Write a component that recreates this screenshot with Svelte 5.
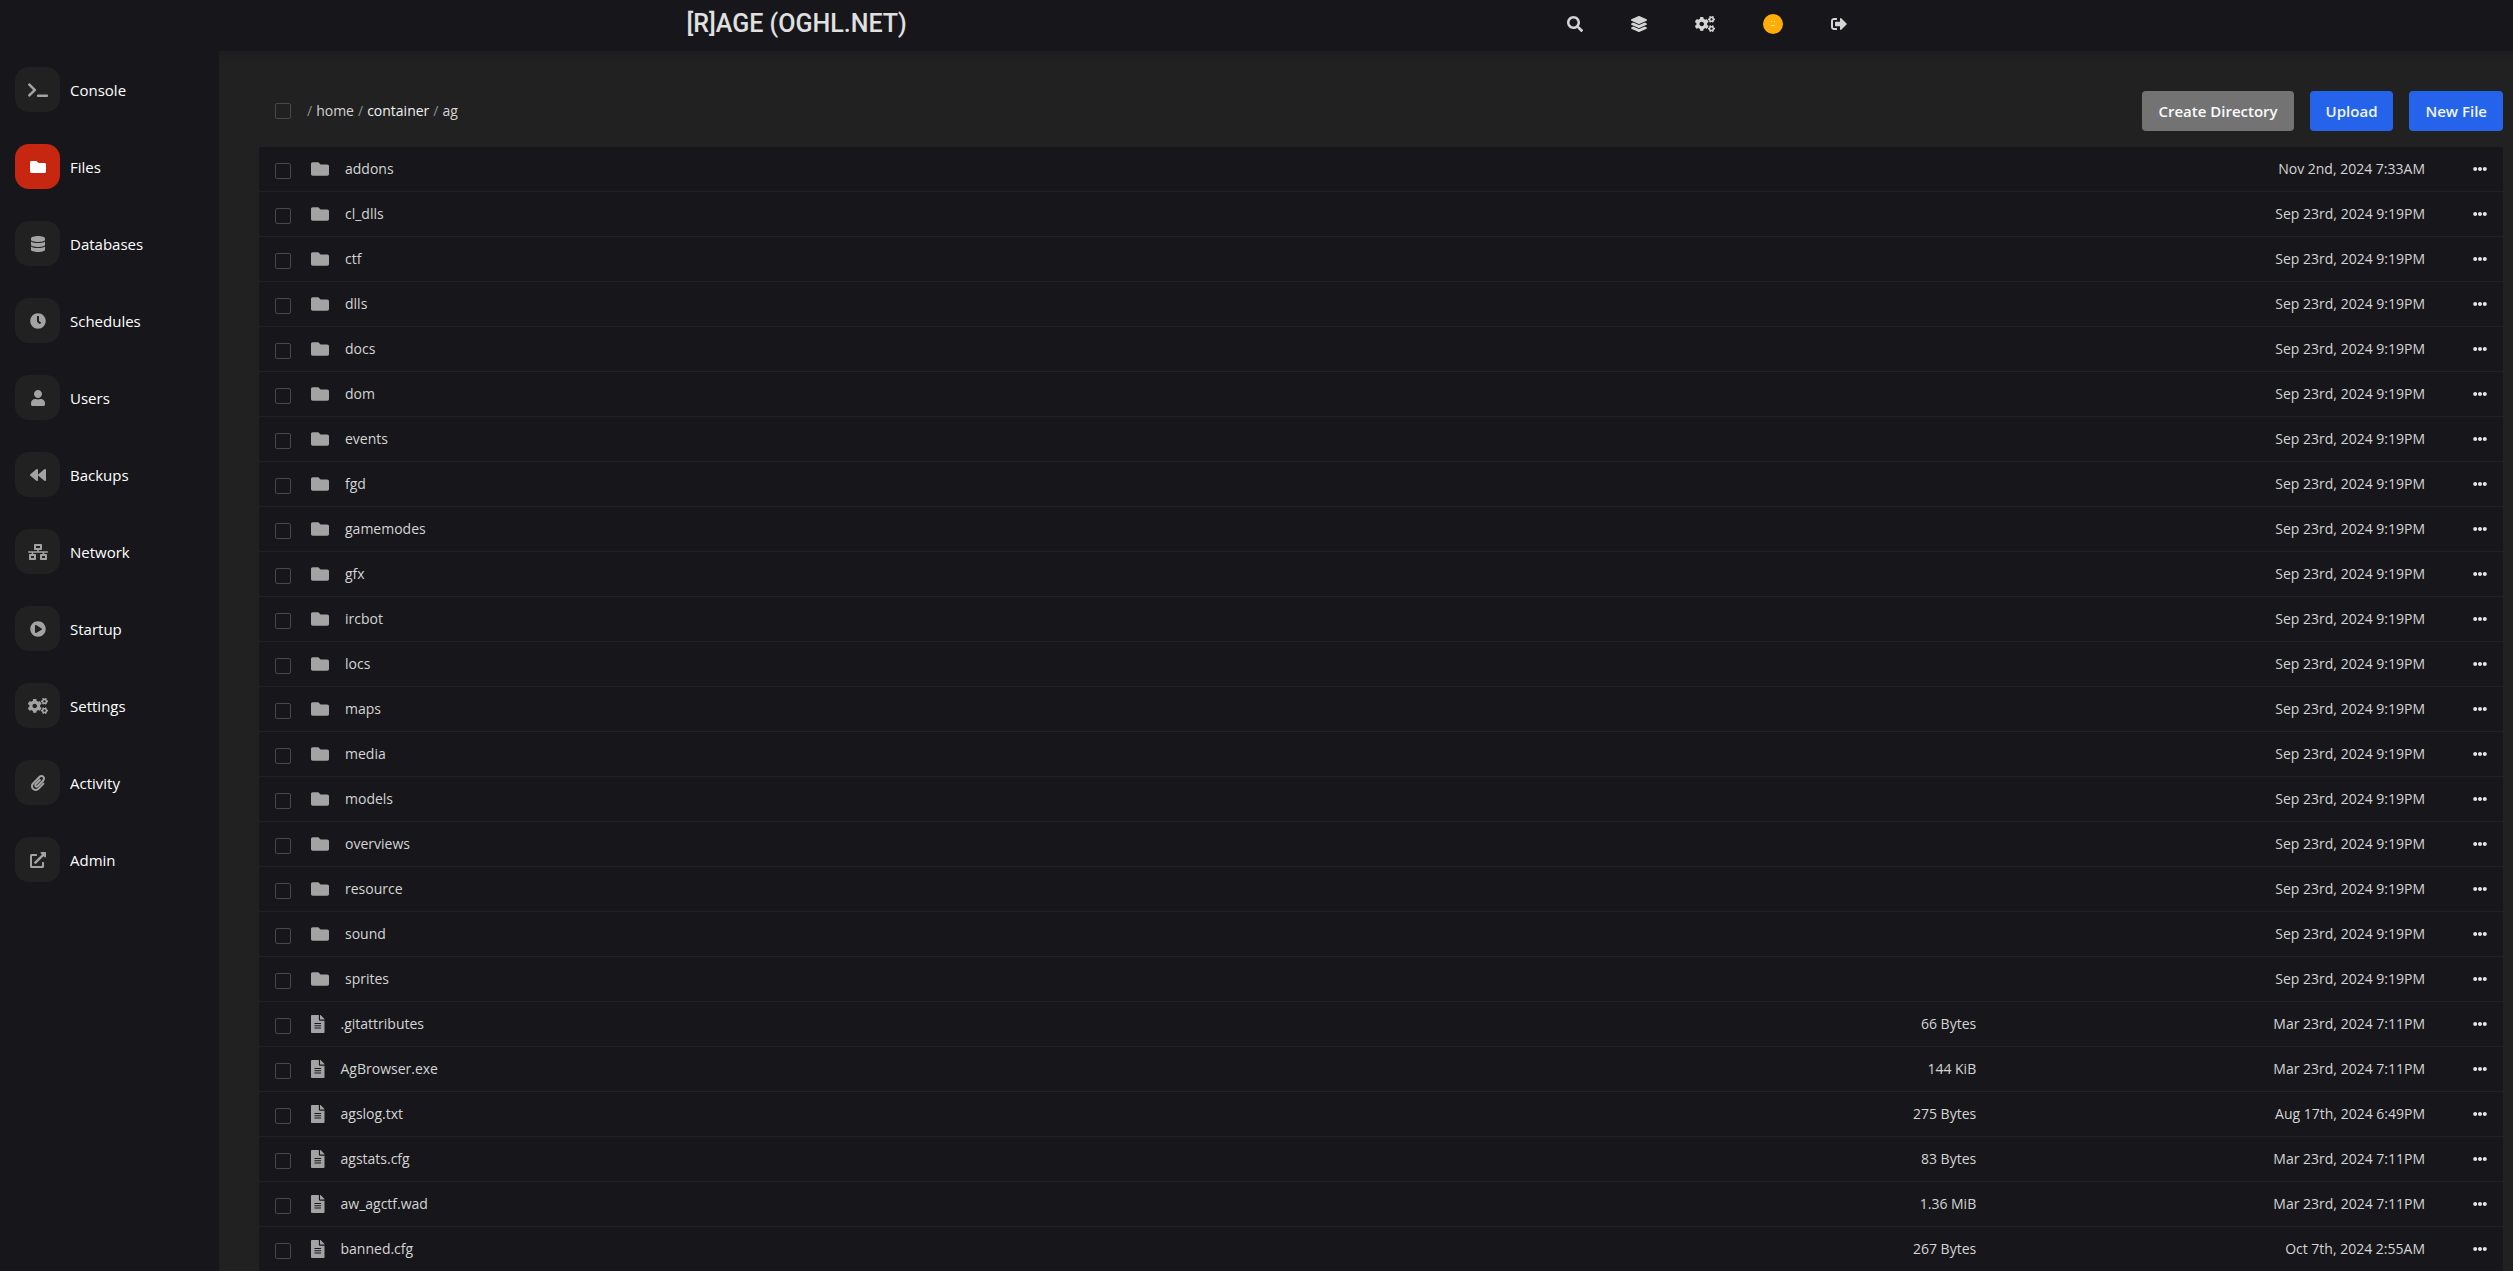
<script lang="ts">
  type IconName = keyof typeof icons;

  const icons = {
    search: { w: 512, d: 'M505 442.7L405.3 343c-4.5-4.5-10.6-7-17-7H372c27.6-35.3 44-79.7 44-128C416 93.1 322.9 0 208 0S0 93.1 0 208s93.1 208 208 208c48.3 0 92.7-16.4 128-44v16.3c0 6.4 2.5 12.5 7 17l99.7 99.7c9.4 9.4 24.6 9.4 33.9 0l28.3-28.3c9.4-9.4 9.4-24.6.1-34zM208 336c-70.7 0-128-57.2-128-128 0-70.7 57.2-128 128-128 70.7 0 128 57.2 128 128 0 70.7-57.2 128-128 128z' },
    layers: { w: 512, d: 'M12.41 148.02l232.94 105.67c6.8 3.09 14.49 3.09 21.29 0l232.94-105.67c16.55-7.51 16.55-32.52 0-40.03L266.65 2.31a25.607 25.607 0 0 0-21.29 0L12.41 107.98c-16.55 7.51-16.55 32.53 0 40.04zm487.18 88.28l-58.09-26.33-161.64 73.27c-7.56 3.43-15.59 5.17-23.86 5.17s-16.29-1.74-23.86-5.17L70.51 209.97l-58.1 26.33c-16.55 7.5-16.55 32.5 0 40l232.94 105.59c6.8 3.08 14.49 3.08 21.29 0L499.59 276.3c16.55-7.5 16.55-32.5 0-40zm0 127.8l-57.87-26.23-161.86 73.37c-7.56 3.43-15.59 5.17-23.86 5.17s-16.29-1.74-23.86-5.17L70.29 337.87 12.41 364.1c-16.55 7.5-16.55 32.5 0 40l232.94 105.59c6.8 3.08 14.49 3.08 21.29 0L499.59 404.1c16.55-7.5 16.55-32.5 0-40z' },
    cogs: { w: 640, d: 'M512.1 191l-8.2 14.3c-3 5.3-9.4 7.5-15.1 5.4-11.8-4.4-22.6-10.7-32.1-18.6-4.6-3.8-5.8-10.5-2.8-15.7l8.2-14.3c-6.9-8-12.3-17.3-15.9-27.4h-16.5c-6 0-11.2-4.3-12.2-10.3-2-12-2.1-24.6 0-37.1 1-6 6.2-10.4 12.2-10.4h16.5c3.6-10.1 9-19.4 15.9-27.4l-8.2-14.3c-3-5.2-1.9-11.9 2.8-15.7 9.5-7.9 20.4-14.2 32.1-18.6 5.7-2.1 12.1.1 15.1 5.4l8.2 14.3c10.5-1.9 21.2-1.9 31.7 0L552 6.3c3-5.3 9.4-7.5 15.1-5.4 11.8 4.4 22.6 10.7 32.1 18.6 4.6 3.8 5.8 10.5 2.8 15.7l-8.2 14.3c6.9 8 12.3 17.3 15.9 27.4h16.5c6 0 11.2 4.3 12.2 10.3 2 12 2.1 24.6 0 37.1-1 6-6.2 10.4-12.2 10.4h-16.5c-3.6 10.1-9 19.4-15.9 27.4l8.2 14.3c3 5.2 1.9 11.9-2.8 15.7-9.5 7.9-20.4 14.2-32.1 18.6-5.7 2.1-12.1-.1-15.1-5.4l-8.2-14.3c-10.4 1.9-21.2 1.9-31.7 0zm-10.5-58.8c38.5 29.6 82.4-14.3 52.8-52.8-38.5-29.7-82.4 14.3-52.8 52.8zM386.3 286.1l33.7 16.8c10.1 5.8 14.5 18.1 10.5 29.1-8.9 24.2-26.4 46.4-42.6 65.8-7.4 8.9-20.2 11.1-30.3 5.3l-29.1-16.8c-16 13.7-34.6 24.6-54.9 31.7v33.6c0 11.6-8.3 21.6-19.7 23.6-24.6 4.2-50.4 4.4-75.9 0-11.5-2-20-11.9-20-23.6V418c-20.3-7.2-38.9-18-54.9-31.7L74 403c-10 5.8-22.9 3.6-30.3-5.3-16.2-19.4-33.3-41.6-42.2-65.7-4-10.9.4-23.2 10.5-29.1l33.3-16.8c-3.9-20.9-3.9-42.4 0-63.4L12 205.8c-10.1-5.8-14.6-18.1-10.5-29 8.9-24.2 26-46.4 42.2-65.8 7.4-8.9 20.2-11.1 30.3-5.3l29.1 16.8c16-13.7 34.6-24.6 54.9-31.7V57.1c0-11.5 8.2-21.5 19.6-23.5 24.6-4.2 50.5-4.4 76-.1 11.5 2 20 11.9 20 23.6v33.6c20.3 7.2 38.9 18 54.9 31.7l29.1-16.8c10-5.8 22.9-3.6 30.3 5.3 16.2 19.4 33.2 41.6 42.1 65.8 4 10.9.1 23.2-10 29.1l-33.7 16.8c3.9 21 3.9 42.5 0 63.5zm-117.6 21.1c59.2-77-28.7-164.9-105.7-105.7-59.2 77 28.7 164.9 105.7 105.7zm243.4 182.7l-8.2 14.3c-3 5.3-9.4 7.5-15.1 5.4-11.8-4.4-22.6-10.7-32.1-18.6-4.6-3.8-5.8-10.5-2.8-15.7l8.2-14.3c-6.9-8-12.3-17.3-15.9-27.4h-16.5c-6 0-11.2-4.3-12.2-10.3-2-12-2.1-24.6 0-37.1 1-6 6.2-10.4 12.2-10.4h16.5c3.6-10.1 9-19.4 15.9-27.4l-8.2-14.3c-3-5.2-1.9-11.9 2.8-15.7 9.5-7.9 20.4-14.2 32.1-18.6 5.7-2.1 12.1.1 15.1 5.4l8.2 14.3c10.5-1.9 21.2-1.9 31.7 0l8.2-14.3c3-5.3 9.4-7.5 15.1-5.4 11.8 4.4 22.6 10.7 32.1 18.6 4.6 3.8 5.8 10.5 2.8 15.7l-8.2 14.3c6.9 8 12.3 17.3 15.9 27.4h16.5c6 0 11.2 4.3 12.2 10.3 2 12 2.1 24.6 0 37.1-1 6-6.2 10.4-12.2 10.4h-16.5c-3.6 10.1-9 19.4-15.9 27.4l8.2 14.3c3 5.2 1.9 11.9-2.8 15.7-9.5 7.9-20.4 14.2-32.1 18.6-5.7 2.1-12.1-.1-15.1-5.4l-8.2-14.3c-10.4 1.9-21.2 1.9-31.7 0zM501.6 431c38.5 29.6 82.4-14.3 52.8-52.8-38.5-29.6-82.4 14.3-52.8 52.8z' },
    signOut: { w: 512, d: 'M497 273L329 441c-15 15-41 4.5-41-17v-96H152c-13.3 0-24-10.7-24-24v-96c0-13.3 10.7-24 24-24h136V88c0-21.4 25.9-32 41-17l168 168c9.3 9.4 9.3 24.6 0 34zM192 436v-40c0-6.6-5.4-12-12-12H96c-17.7 0-32-14.3-32-32V160c0-17.7 14.3-32 32-32h84c6.6 0 12-5.4 12-12V76c0-6.6-5.4-12-12-12H96c-53 0-96 43-96 96v192c0 53 43 96 96 96h84c6.6 0 12-5.4 12-12z' },
    terminal: { w: 640, d: 'M257.981 272.971L63.638 467.314c-9.373 9.373-24.569 9.373-33.941 0L7.029 444.647c-9.357-9.357-9.375-24.522-.04-33.901L161.011 256 6.99 101.255c-9.335-9.379-9.317-24.544.04-33.901l22.667-22.667c9.373-9.373 24.569-9.373 33.941 0L257.981 239.03c9.373 9.372 9.373 24.568 0 33.941zM640 456v-32c0-13.255-10.745-24-24-24H312c-13.255 0-24 10.745-24 24v32c0 13.255 10.745 24 24 24h304c13.255 0 24-10.745 24-24z' },
    folder: { w: 512, d: 'M464 128H272l-64-64H48C21.49 64 0 85.49 0 112v288c0 26.51 21.49 48 48 48h416c26.51 0 48-21.49 48-48V176c0-26.51-21.49-48-48-48z' },
    database: { w: 448, d: 'M448 73.143v45.714C448 159.143 347.667 192 224 192S0 159.143 0 118.857V73.143C0 32.857 100.333 0 224 0s224 32.857 224 73.143zM448 176v102.857C448 319.143 347.667 352 224 352S0 319.143 0 278.857V176c48.125 33.143 136.208 48.572 224 48.572S399.874 209.143 448 176zm0 160v102.857C448 479.143 347.667 512 224 512S0 479.143 0 438.857V336c48.125 33.143 136.208 48.572 224 48.572S399.874 369.143 448 336z' },
    clock: { w: 512, d: 'M256,8C119,8,8,119,8,256S119,504,256,504,504,393,504,256,393,8,256,8Zm92.49,313h0l-20,25a16,16,0,0,1-22.49,2.5h0l-67-49.72a40,40,0,0,1-15-31.23V112a16,16,0,0,1,16-16h32a16,16,0,0,1,16,16V256l58,42.5A16,16,0,0,1,348.49,321Z' },
    user: { w: 448, d: 'M224 256c70.7 0 128-57.3 128-128S294.7 0 224 0 96 57.3 96 128s57.3 128 128 128zm89.6 32h-16.7c-22.2 10.2-46.9 16-72.9 16s-50.6-5.8-72.9-16h-16.7C60.2 288 0 348.2 0 422.4V464c0 26.5 21.5 48 48 48h352c26.5 0 48-21.5 48-48v-41.6c0-74.2-60.2-134.4-134.4-134.4z' },
    backward: { w: 512, d: 'M11.5 280.6l192 160c20.6 17.2 52.5 2.8 52.5-24.6V96c0-27.4-31.9-41.8-52.5-24.6l-192 160c-15.3 12.8-15.3 36.4 0 49.2zm256 0l192 160c20.6 17.2 52.5 2.8 52.5-24.6V96c0-27.4-31.9-41.8-52.5-24.6l-192 160c-15.3 12.8-15.3 36.4 0 49.2z' },
    network: { w: 640, d: 'M640 264v-16c0-8.84-7.16-16-16-16H344v-40h72c17.67 0 32-14.33 32-32V32c0-17.67-14.33-32-32-32H224c-17.67 0-32 14.33-32 32v128c0 17.67 14.33 32 32 32h72v40H16c-8.84 0-16 7.16-16 16v16c0 8.84 7.16 16 16 16h104v40H64c-17.67 0-32 14.33-32 32v128c0 17.67 14.33 32 32 32h160c17.67 0 32-14.33 32-32V352c0-17.67-14.33-32-32-32h-56v-40h304v40h-56c-17.67 0-32 14.33-32 32v128c0 17.67 14.33 32 32 32h160c17.67 0 32-14.33 32-32V352c0-17.67-14.33-32-32-32h-56v-40h104c8.84 0 16-7.16 16-16zM256 128V64h128v64H256zm-64 320H96v-64h96v64zm352 0h-96v-64h96v64z' },
    play: { w: 512, d: 'M256 8C119 8 8 119 8 256s111 248 248 248 248-111 248-248S393 8 256 8zm115.7 272l-176 101c-15.8 8.8-35.7-2.5-35.7-21V152c0-18.4 19.8-29.8 35.7-21l176 107c16.4 9.2 16.4 32.9 0 42z' },
    paperclip: { w: 448, d: 'M43.246 466.142c-58.43-60.289-57.341-157.511 1.386-217.581L254.392 34c44.316-45.332 116.351-45.336 160.671 0 43.89 44.894 43.943 117.329 0 162.276L232.214 383.128c-29.855 30.537-78.633 30.111-107.982-.998-28.275-29.97-27.368-77.473 1.452-106.953l143.743-146.835c6.182-6.314 16.312-6.422 22.626-.241l22.861 22.379c6.315 6.182 6.422 16.312.241 22.626L171.427 319.927c-4.932 5.045-5.236 13.428-.648 18.292 4.372 4.634 11.245 4.711 15.688.165l182.849-186.851c19.613-20.062 19.613-52.725-.011-72.798-19.189-19.627-49.957-19.637-69.154 0L90.39 293.295c-34.763 35.56-35.299 93.12-1.191 128.313 34.01 35.093 88.985 35.137 123.058.286l172.06-175.999c6.177-6.319 16.307-6.433 22.626-.256l22.877 22.364c6.319 6.177 6.434 16.307.256 22.626l-172.06 175.998c-59.576 60.938-155.943 60.216-214.77-.485z' },
    external: { w: 512, d: 'M432,320H400a16,16,0,0,0-16,16V448H64V128H208a16,16,0,0,0,16-16V80a16,16,0,0,0-16-16H48A48,48,0,0,0,0,112V464a48,48,0,0,0,48,48H400a48,48,0,0,0,48-48V336A16,16,0,0,0,432,320ZM488,0h-128c-21.37,0-32.05,25.91-17,41l35.73,35.73L135,320.37a24,24,0,0,0,0,34L157.67,377a24,24,0,0,0,34,0L435.28,133.32,471,169c15,15,41,4.5,41-17V24A24,24,0,0,0,488,0Z' },
    file: { w: 384, d: 'M224 136V0H24C10.7 0 0 10.7 0 24v464c0 13.3 10.7 24 24 24h336c13.3 0 24-10.7 24-24V160H248c-13.2 0-24-10.8-24-24zm64 236c0 6.6-5.4 12-12 12H108c-6.6 0-12-5.4-12-12v-8c0-6.6 5.4-12 12-12h168c6.6 0 12 5.4 12 12v8zm0-64c0 6.6-5.4 12-12 12H108c-6.6 0-12-5.4-12-12v-8c0-6.6 5.4-12 12-12h168c6.6 0 12 5.4 12 12v8zm0-72v8c0 6.6-5.4 12-12 12H108c-6.6 0-12-5.4-12-12v-8c0-6.6 5.4-12 12-12h168c6.6 0 12 5.4 12 12zm96-114.1v6.1H256V0h6.1c6.4 0 12.5 2.5 17 7l97.9 98c4.5 4.5 7 10.6 7 16.9z' },
    ellipsis: { w: 512, d: 'M328 256c0 39.8-32.2 72-72 72s-72-32.2-72-72 32.2-72 72-72 72 32.2 72 72zm104-72c-39.8 0-72 32.2-72 72s32.2 72 72 72 72-32.2 72-72-32.2-72-72-72zm-352 0c-39.8 0-72 32.2-72 72s32.2 72 72 72 72-32.2 72-72-32.2-72-72-72z' }
  };

  const menu: { label: string; icon: IconName }[] = [
    { label: 'Console', icon: 'terminal' },
    { label: 'Files', icon: 'folder' },
    { label: 'Databases', icon: 'database' },
    { label: 'Schedules', icon: 'clock' },
    { label: 'Users', icon: 'user' },
    { label: 'Backups', icon: 'backward' },
    { label: 'Network', icon: 'network' },
    { label: 'Startup', icon: 'play' },
    { label: 'Settings', icon: 'cogs' },
    { label: 'Activity', icon: 'paperclip' },
    { label: 'Admin', icon: 'external' }
  ];

  type Entry = { name: string; kind: 'folder' | 'file'; size: string; modified: string };

  const SEPTEMBER = 'Sep 23rd, 2024 9:19PM';
  const MARCH = 'Mar 23rd, 2024 7:11PM';
  const folder = (name: string, modified = SEPTEMBER): Entry => ({ name, kind: 'folder', size: '', modified });
  const file = (name: string, size: string, modified = MARCH): Entry => ({ name, kind: 'file', size, modified });

  const entries: Entry[] = [
    folder('addons', 'Nov 2nd, 2024 7:33AM'),
    ...['cl_dlls', 'ctf', 'dlls', 'docs', 'dom', 'events', 'fgd', 'gamemodes', 'gfx', 'ircbot', 'locs',
      'maps', 'media', 'models', 'overviews', 'resource', 'sound', 'sprites'].map((n) => folder(n)),
    file('.gitattributes', '66 Bytes'),
    file('AgBrowser.exe', '144 KiB'),
    file('agslog.txt', '275 Bytes', 'Aug 17th, 2024 6:49PM'),
    file('agstats.cfg', '83 Bytes'),
    file('aw_agctf.wad', '1.36 MiB'),
    file('banned.cfg', '267 Bytes', 'Oct 7th, 2024 2:55AM')
  ];
</script>

{#snippet icon(name: IconName)}
  <svg class="icon" viewBox="0 0 {icons[name].w} 512" aria-hidden="true"><path d={icons[name].d} /></svg>
{/snippet}

<div class="page">
  <header class="topbar">
    <div class="topbar-inner">
      <a class="brand" href="#home">[R]AGE (OGHL.NET)</a>
      <nav class="tools" aria-label="Account">
        <button type="button" aria-label="Search">{@render icon('search')}</button>
        <a href="#servers" aria-label="Servers">{@render icon('layers')}</a>
        <a href="#admin" aria-label="Administration">{@render icon('cogs')}</a>
        <a href="#account" aria-label="Account settings">
          <svg class="avatar" viewBox="0 0 20 20" aria-hidden="true">
            <circle cx="10" cy="10" r="10" fill="#ffad08" />
            <path d="M8.5 7v1M11.5 7v1M8 11.5h4" stroke="#ffe2a6" stroke-width="1" />
          </svg>
        </a>
        <button type="button" aria-label="Sign out">{@render icon('signOut')}</button>
      </nav>
    </div>
  </header>

  <div class="body">
    <nav class="sidebar" aria-label="Server">
      {#each menu as item}
        <a class="menu-item" class:active={item.label === 'Files'} href="#{item.label.toLowerCase()}">
          <span class="tile">{@render icon(item.icon)}</span>
          {item.label}
        </a>
      {/each}
    </nav>

    <main class="content">
      <div class="toolbar">
        <input type="checkbox" aria-label="Select all files" />
        <div class="crumbs">
          <span>/</span>
          <span class="crumb">home</span>
          <span>/</span>
          <a class="crumb root" href="#container">container</a>
          <span>/</span>
          <span class="crumb">ag</span>
        </div>
        <div class="actions">
          <button type="button" class="secondary">Create Directory</button>
          <button type="button">Upload</button>
          <button type="button">New File</button>
        </div>
      </div>

      <table class="files">
        <colgroup>
          <col class="col-check" /><col /><col class="col-size" /><col class="col-date" /><col class="col-menu" />
        </colgroup>
        <tbody>
          {#each entries as entry}
            <tr>
              <td class="check"><input type="checkbox" aria-label="Select {entry.name}" /></td>
              <td><a class="name" href="#{entry.name}">{@render icon(entry.kind)}{entry.name}</a></td>
              <td class="right">{entry.size}</td>
              <td class="right">{entry.modified}</td>
              <td class="more"><button type="button" aria-label="Actions for {entry.name}">{@render icon('ellipsis')}</button></td>
            </tr>
          {/each}
        </tbody>
      </table>
    </main>
  </div>
</div>

<style>
  :global(body) {
    margin: 0;
    background: #17171b;
  }

  .page {
    min-height: 100vh;
    display: flex;
    flex-direction: column;
    font-family: 'Open Sans', 'Noto Sans', sans-serif;
    font-size: 14px;
    line-height: 20px;
    color: #d4d4d4;
    background: #17171b;
  }

  a {
    color: inherit;
    text-decoration: none;
  }

  button {
    border: 0;
    padding: 0;
    background: none;
    color: inherit;
    font: inherit;
    cursor: pointer;
  }

  .icon {
    display: block;
    height: 16px;
    fill: currentColor;
  }

  .topbar-inner {
    max-width: 1228px;
    height: 47px;
    margin: 0 auto;
    padding-bottom: 4px;
    display: flex;
    align-items: center;
  }

  .brand {
    flex: 1;
    padding-left: 44px;
    font-family: Roboto, sans-serif;
    font-size: 25px;
    font-weight: 500;
    line-height: 32px;
    color: #e0e0e0;
  }

  .tools {
    display: flex;
    align-items: center;
  }

  .tools > * {
    padding: 0 24px;
  }

  .avatar {
    display: block;
    width: 20px;
    height: 20px;
  }

  .body {
    flex: 1;
    display: flex;
  }

  .sidebar {
    flex: 0 0 204px;
    padding: 16px 0 0 15px;
    display: flex;
    flex-direction: column;
    gap: 32px;
  }

  .menu-item {
    display: flex;
    align-items: center;
    gap: 10px;
    font-size: 15px;
    line-height: 24px;
    color: #fff;
  }

  .tile {
    width: 45px;
    height: 45px;
    display: grid;
    place-items: center;
    border-radius: 14px;
    background: #212121;
    color: #a3a3a3;
  }

  .active .tile {
    background: #c72611;
    color: #fff;
  }

  .content {
    flex: 1;
    min-width: 0;
    padding: 40px 10px 0 40px;
    background: #212121;
    box-shadow: inset 0 8px 8px -8px #1b1b1c;
  }

  .toolbar {
    display: flex;
    align-items: center;
    padding: 0 0 15px 16px;
  }

  input[type='checkbox'] {
    appearance: none;
    display: block;
    width: 16px;
    height: 16px;
    margin: 0;
    border: 1px solid #484848;
    border-radius: 2px;
  }

  .crumbs {
    flex: 1;
    display: flex;
    gap: 4px;
    padding-left: 16px;
    color: #8f8f8f;
  }

  .crumb {
    color: #d4d4d4;
  }

  .root {
    color: #f0f0f0;
  }

  .actions {
    display: flex;
    gap: 16px;
  }

  .actions button {
    height: 40px;
    padding: 0 16px;
    border-radius: 4px;
    background: #2563eb;
    color: #eff6ff;
    font-size: 15px;
    font-weight: 600;
  }

  .actions .secondary {
    background: #737373;
    color: #fafafa;
  }

  .files {
    width: 100%;
    table-layout: fixed;
    border-collapse: separate;
    border-spacing: 0 1px;
  }

  .col-check {
    width: 52px;
  }

  .col-size {
    width: 17%;
  }

  .col-date {
    width: 20%;
  }

  .col-menu {
    width: 78px;
  }

  td {
    height: 44px;
    padding: 0;
    background: #17171b;
  }

  td:first-child {
    border-radius: 2px 0 0 2px;
  }

  td:last-child {
    border-radius: 0 2px 2px 0;
  }

  .check {
    box-sizing: border-box;
    padding: 4px 0 0 16px;
  }

  .name {
    display: flex;
    align-items: center;
    gap: 16px;
  }

  .name .icon {
    height: 18px;
    color: #a3a3a3;
  }

  .right {
    text-align: right;
  }

  .more {
    color: #e5e5e5;
  }

  .more button {
    display: block;
    margin: 0 16px 0 auto;
  }

  .more .icon {
    height: 14px;
  }
</style>
